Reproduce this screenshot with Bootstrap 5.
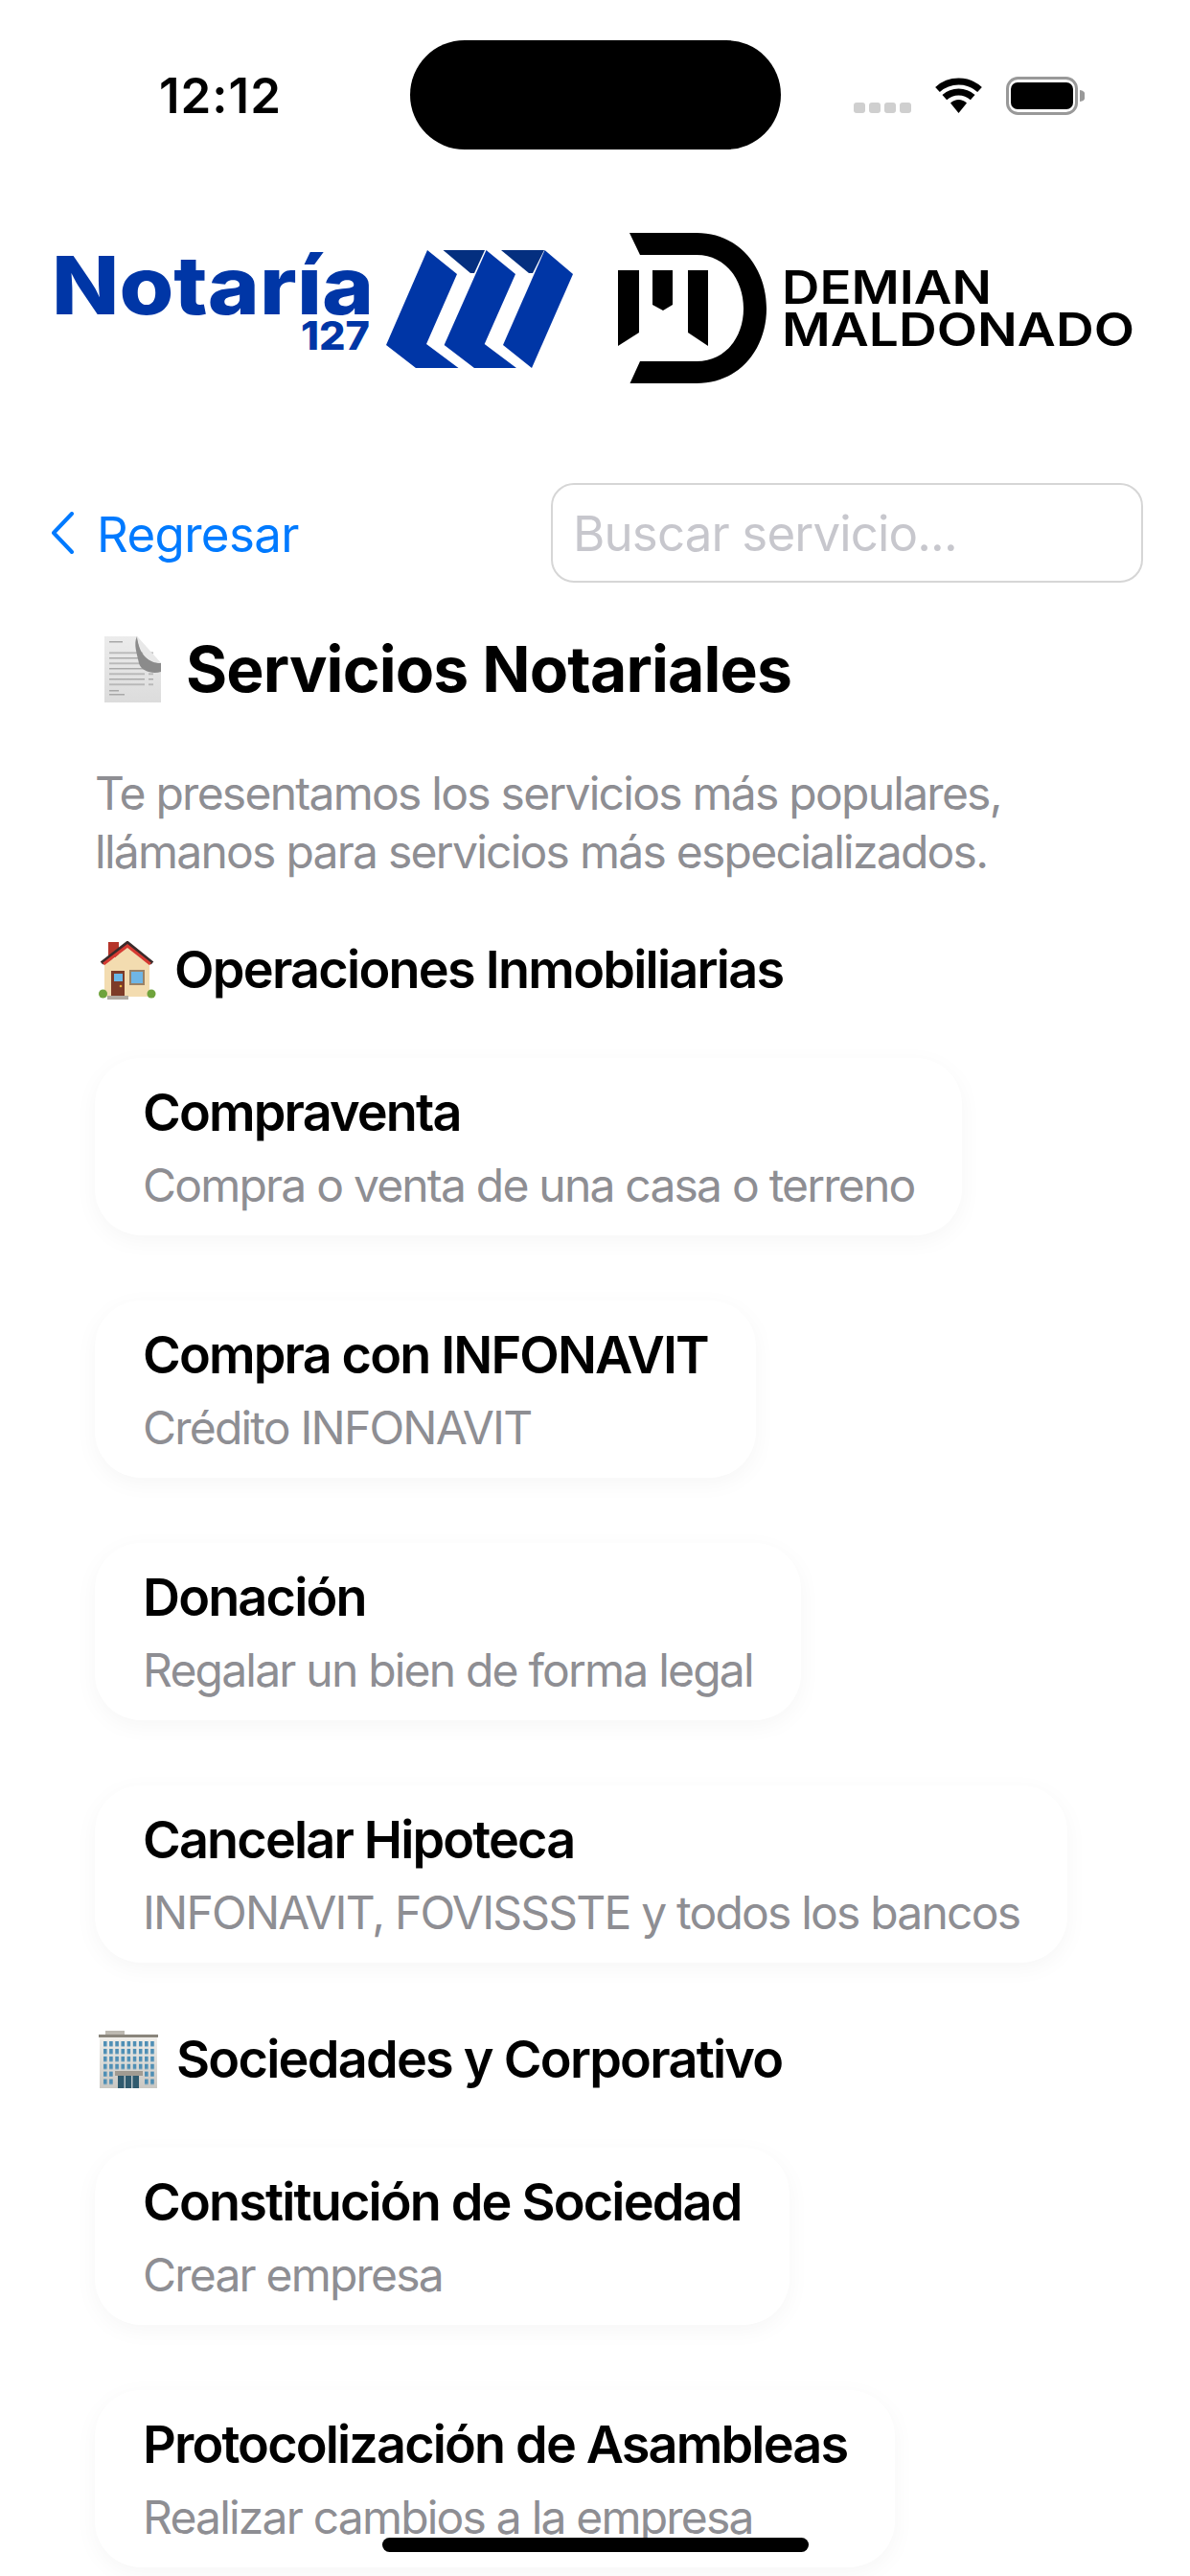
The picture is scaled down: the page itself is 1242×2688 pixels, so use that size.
<!DOCTYPE html>
<html lang="es">
<head>
  <meta charset="UTF-8" />
  <meta name="viewport" content="width=device-width, initial-scale=1.0"/>
  <title>Servicios Notariales</title>
  <link href="https://cdn.jsdelivr.net/npm/bootstrap@5.3.0/dist/css/bootstrap.min.css" rel="stylesheet">
  <style>
    body {
      background-color: #fff;
      color: #000;
      font-family: Inter, "Liberation Sans", sans-serif;
    }

    .phone-screen {
      position: relative;
      width: 1242px;
      height: 2688px;
      overflow: hidden;
    }

    .status-row {
      height: 243px;
      padding-top: 42px;
    }

    .status-time {
      width: 428px;
      padding: 33px 0 0 166px;
      font-size: 51px;
      line-height: 50px;
      font-weight: 600;
      letter-spacing: 1px;
    }

    .status-pill {
      width: 387px;
      height: 114px;
      background-color: #000;
      border-radius: 57px;
    }

    .status-icons {
      padding: 38px 0 0 76px;
      gap: 24px;
    }

    .signal-dots {
      gap: 4px;
      padding-top: 27px;
    }

    .signal-dots span {
      width: 12px;
      height: 11px;
      background-color: #cfcfcf;
      border-radius: 3px;
    }

    .logo-strip {
      display: block;
      width: 1242px;
      height: 165px;
    }

    .tool-row {
      padding: 96px 49px 0 53px;
    }

    .back-link {
      color: #007aff;
      font-size: 51px;
      line-height: 60px;
      letter-spacing: -.65px;
      gap: 24px;
      text-decoration: none;
    }

    .back-link span {
      padding-top: 3px;
    }

    .search-box.form-control {
      width: 618px;
      height: 104px;
      padding: 0 21px;
      font-size: 51px;
      letter-spacing: -.85px;
      border: 2px solid #d6d6d6;
      border-radius: 24px;
      color: #000;
    }

    .search-box::placeholder {
      color: #c7c7cd;
      opacity: 1;
    }

    .main-column {
      padding: 50px 0 0 99px;
    }

    .page-heading {
      gap: 26px;
      padding-left: 10px;
      margin: 0 0 59px;
      font-size: 66px;
      line-height: 80px;
      font-weight: 700;
      letter-spacing: -.85px;
      font-family: Inter, "Liberation Sans", sans-serif;
    }

    .page-intro {
      margin: 0;
      width: 1000px;
      font-size: 48px;
      line-height: 61px;
      letter-spacing: -1.75px;
      color: #8e8e93;
    }

    .group-heading {
      gap: 19px;
      padding-left: 4px;
      margin: 60px 0 59px;
      height: 66px;
      font-size: 54px;
      line-height: 66px;
      font-weight: 580;
      letter-spacing: -1.75px;
      font-family: Inter, "Liberation Sans", sans-serif;
    }

    .group-heading.later-group {
      margin-top: 68px;
    }

    .service-list {
      gap: 68px;
    }

    .service-item.card {
      height: 185px;
      padding: 27px 50px 20px;
      border: 0;
      border-radius: 48px;
      background-color: #fff;
      box-shadow: 0 6px 24px rgba(0, 0, 0, .04);
    }

    .service-name {
      margin: 0 0 16px;
      font-size: 54px;
      line-height: 60px;
      font-weight: 580;
      letter-spacing: -1.85px;
      font-family: Inter, "Liberation Sans", sans-serif;
      white-space: nowrap;
    }

    .service-note {
      margin: 0;
      font-size: 48px;
      line-height: 60px;
      letter-spacing: -1.8px;
      color: #8e8e93;
      white-space: nowrap;
    }

    .home-bar {
      position: absolute;
      left: 399px;
      top: 2648px;
      width: 445px;
      height: 15px;
      background-color: #000;
      border-radius: 8px;
    }
  </style>
</head>
<body>
  <div class="phone-screen">
    <div class="status-row d-flex">
      <div class="status-time">12:12</div>
      <div class="status-pill"></div>
      <div class="status-icons d-flex align-items-start">
        <div class="signal-dots d-flex"><span></span><span></span><span></span><span></span></div>
        <svg width="51" height="38" viewBox="0 0 51 38">
          <path d="M3.5 13.5A33 33 0 0 1 47.5 13.5" fill="none" stroke="#000" stroke-width="7"/>
          <path d="M10.8 21.7A22 22 0 0 1 40.2 21.7" fill="none" stroke="#000" stroke-width="7"/>
          <path d="M25.5 38L17 27.5A12 12 0 0 1 34 27.5Z" fill="#000"/>
        </svg>
        <svg width="82" height="40" viewBox="0 0 82 40">
          <rect x="1.5" y="1.5" width="72" height="37" rx="11" fill="none" stroke="#999" stroke-width="3"/>
          <rect x="5" y="6" width="65" height="28" rx="7" fill="#000"/>
          <path d="M77 14a6 6 0 0 1 0 12Z" fill="#999"/>
        </svg>
      </div>
    </div>

    <svg class="logo-strip" viewBox="0 243 1242 165">
      <g fill="#0036a6">
        <text x="54" y="328" font-family="Inter" font-weight="800" font-size="84" textLength="336" lengthAdjust="spacingAndGlyphs">Notaría</text>
        <text x="314" y="365" font-family="Inter" font-weight="800" font-size="41" textLength="72" lengthAdjust="spacingAndGlyphs">127</text>
        <path d="M446 261L477 286L445 359L478.500 384H434L403 360Z"/>
        <path d="M507.500 261L538 286L505.700 359L539 384H495L463.600 360Z"/>
        <path d="M568.500 261L598 286L555 384L525 360Z"/>
      </g>
      <g fill="#042f7f">
        <path d="M462.500 261H506L495 285H491Z"/>
        <path d="M523 261H568L556 285H552Z"/>
      </g>
      <g fill="#000">
        <path d="M657 243H727C772 243 800 280 800 322C800 364 772 400 727 400H657.500L668 377H727C757 377 776 352 776 322C776 292 757 266 727 266H668Z"/>
        <path d="M645 282H667V347L645 361Z"/>
        <path d="M681 282H702V318L692 324L681 318Z"/>
        <path d="M718 282H739V361L718 347Z"/>
        <text x="816" y="317" font-family="Inter" font-weight="600" font-size="48" textLength="219" lengthAdjust="spacingAndGlyphs">DEMIAN</text>
        <text x="816" y="361" font-family="Inter" font-weight="600" font-size="48" textLength="368" lengthAdjust="spacingAndGlyphs">MALDONADO</text>
      </g>
    </svg>

    <div class="tool-row d-flex justify-content-between align-items-center">
      <a class="back-link d-flex align-items-center" href="#">
        <svg width="24" height="44" viewBox="0 0 24 44">
          <path d="M22 2L3 22L22 42" fill="none" stroke="#007aff" stroke-width="4" stroke-linecap="round" stroke-linejoin="round"/>
        </svg>
        <span>Regresar</span>
      </a>
      <input class="search-box form-control" type="text" placeholder="Buscar servicio...">
    </div>

    <div class="main-column">
      <h1 class="page-heading d-flex align-items-center">
        <svg width="59" height="69" viewBox="0 0 59 69">
          <defs>
            <linearGradient id="docFill" x1="0" y1="0" x2="0" y2="1">
              <stop offset="0" stop-color="#ececec"/>
              <stop offset="1" stop-color="#dcdcdc"/>
            </linearGradient>
            <pattern id="docLines" width="46" height="5.500" patternUnits="userSpaceOnUse">
              <rect width="42" height="1.400" fill="#a8a8a8"/>
            </pattern>
          </defs>
          <path d="M0 0H34L59 28V69H0Z" fill="url(#docFill)"/>
          <rect x="5" y="14" width="46" height="38" fill="url(#docLines)"/>
          <rect x="5" y="5" width="14" height="1.500" fill="#a8a8a8"/>
          <rect x="5" y="56" width="10" height="1.500" fill="#a8a8a8"/>
          <rect x="5" y="60" width="16" height="1.500" fill="#a8a8a8"/>
          <path d="M34 0C36 14 40 26 59 28V37C50 40 38 36 36 28C34 18 30 8 34 0Z" fill="#8b8b8b"/>
          <path d="M34 0L59 28C46 28 38 20 34 0Z" fill="#e8e8e8"/>
        </svg>
        <span>Servicios Notariales</span>
      </h1>
      <p class="page-intro">Te presentamos los servicios más populares, llámanos para servicios más especializados.</p>

      <h2 class="group-heading d-flex align-items-center">
        <svg width="60" height="61" viewBox="0 0 60 61">
          <rect x="10" y="1" width="11" height="16" fill="#b5352a"/>
          <rect x="6" y="19" width="47" height="39" fill="#f3dcb0"/>
          <path d="M30 6L9 24H51Z" fill="#f3dcb0"/>
          <path d="M3 23L30 2L56 23" fill="none" stroke="#3a2a2a" stroke-width="4"/>
          <path d="M5 24L30 5L54 24" fill="none" stroke="#d63a32" stroke-width="3"/>
          <rect x="13" y="31" width="14" height="26" fill="#7d3b28"/>
          <rect x="16" y="34" width="9" height="8" fill="#6ab7e8"/>
          <circle cx="23" cy="47" r="1.300" fill="#e8b23a"/>
          <rect x="32" y="30" width="16" height="16" fill="#9a8266"/>
          <rect x="34" y="32" width="12" height="12" fill="#6fb6e6"/>
          <rect x="9" y="57" width="22" height="4" fill="#b0aaa2"/>
          <circle cx="4.500" cy="55" r="4.500" fill="#6fa33c"/>
          <circle cx="55" cy="55" r="4.500" fill="#6fa33c"/>
        </svg>
        <span>Operaciones Inmobiliarias</span>
      </h2>
      <div class="service-list d-flex flex-column align-items-start">
        <div class="service-item card">
          <h3 class="service-name">Compraventa</h3>
          <p class="service-note">Compra o venta de una casa o terreno</p>
        </div>
        <div class="service-item card">
          <h3 class="service-name">Compra con INFONAVIT</h3>
          <p class="service-note">Crédito INFONAVIT</p>
        </div>
        <div class="service-item card">
          <h3 class="service-name">Donación</h3>
          <p class="service-note">Regalar un bien de forma legal</p>
        </div>
        <div class="service-item card">
          <h3 class="service-name">Cancelar Hipoteca</h3>
          <p class="service-note">INFONAVIT, FOVISSSTE y todos los bancos</p>
        </div>
      </div>

      <h2 class="group-heading later-group d-flex align-items-center">
        <svg width="62" height="60" viewBox="0 0 62 60">
          <defs>
            <linearGradient id="towerFill" x1="0" y1="0" x2="0" y2="1">
              <stop offset="0" stop-color="#f0eeea"/>
              <stop offset="1" stop-color="#c9c7c2"/>
            </linearGradient>
            <pattern id="towerPanes" x="5" y="11" width="6.150" height="7.900" patternUnits="userSpaceOnUse">
              <rect width="3.600" height="5.400" fill="#4f8fb5"/>
            </pattern>
          </defs>
          <rect x="7" y="0" width="20" height="4" fill="#bcb8b0"/>
          <rect x="0" y="4" width="62" height="3" fill="#8a857c"/>
          <rect x="1" y="7" width="60" height="53" fill="url(#towerFill)"/>
          <rect x="5" y="11" width="54" height="30" fill="url(#towerPanes)"/>
          <rect x="5" y="42" width="10" height="6" fill="url(#towerPanes)"/>
          <rect x="48" y="42" width="10" height="6" fill="url(#towerPanes)"/>
          <rect x="5" y="50" width="10" height="7" fill="url(#towerPanes)"/>
          <rect x="48" y="50" width="10" height="7" fill="url(#towerPanes)"/>
          <rect x="17" y="42" width="29" height="5" fill="#a09b92"/>
          <rect x="20" y="47" width="22" height="13" fill="#2f5a6e"/>
          <rect x="26.500" y="47" width="1.500" height="13" fill="#b9c4c8"/>
          <rect x="34" y="47" width="1.500" height="13" fill="#b9c4c8"/>
        </svg>
        <span>Sociedades y Corporativo</span>
      </h2>
      <div class="service-list d-flex flex-column align-items-start">
        <div class="service-item card">
          <h3 class="service-name">Constitución de Sociedad</h3>
          <p class="service-note">Crear empresa</p>
        </div>
        <div class="service-item card">
          <h3 class="service-name">Protocolización de Asambleas</h3>
          <p class="service-note">Realizar cambios a la empresa</p>
        </div>
      </div>
    </div>

    <div class="home-bar"></div>
  </div>

  <script src="https://cdn.jsdelivr.net/npm/bootstrap@5.3.0/dist/js/bootstrap.bundle.min.js"></script>
</body>
</html>
